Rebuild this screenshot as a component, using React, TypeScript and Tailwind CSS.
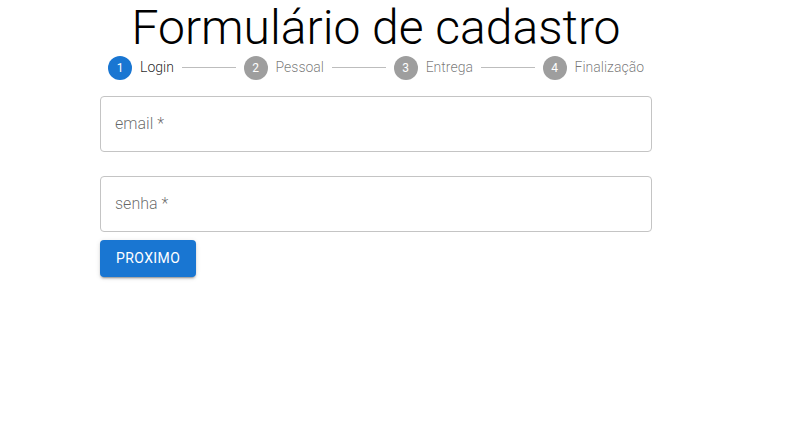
import React from 'react';

const steps = ['Login', 'Pessoal', 'Entrega', 'Finalização'];

const App: React.FC = () => {
  return (
    <div className="w-[785px] h-[442px] bg-white font-['Roboto',sans-serif]">
      <div className="w-[552px] ml-[100px]">
        <h1 className="text-center text-[48px] font-light leading-[1.1] text-black pt-[2px]">
          Formulário de cadastro
        </h1>
        <div className="flex items-center px-2 mt-[1px]">
          {steps.map((s, i) => (
            <React.Fragment key={s}>
              <div className="flex items-center">
                <span
                  className={`w-6 h-6 rounded-full flex items-center justify-center text-[12px] text-white ${i === 0 ? 'bg-[#1976d2]' : 'bg-[#9e9e9e]'}`}
                >
                  {i + 1}
                </span>
                <span
                  className={`pl-2 text-[14px] font-light ${i === 0 ? 'text-[rgba(0,0,0,0.87)]' : 'text-[rgba(0,0,0,0.54)]'}`}
                >
                  {s}
                </span>
              </div>
              {i < steps.length - 1 && (
                <div className="flex-1 mx-2 border-t border-[#bdbdbd]" />
              )}
            </React.Fragment>
          ))}
        </div>
        <div className="mt-4 h-14 border border-[#c4c4c4] rounded flex items-center px-[14px]">
          <span className="text-[16px] font-light text-[rgba(0,0,0,0.6)]">email *</span>
        </div>
        <div className="mt-6 h-14 border border-[#c4c4c4] rounded flex items-center px-[14px]">
          <span className="text-[16px] font-light text-[rgba(0,0,0,0.6)]">senha *</span>
        </div>
        <button className="mt-2 h-[37px] px-4 bg-[#1976d2] text-white text-[14px] font-normal uppercase tracking-[0.4px] rounded shadow-[0_3px_1px_-2px_rgba(0,0,0,0.2),0_2px_2px_0_rgba(0,0,0,0.14),0_1px_5px_0_rgba(0,0,0,0.12)]">
          Proximo
        </button>
      </div>
    </div>
  );
};

export default App;
